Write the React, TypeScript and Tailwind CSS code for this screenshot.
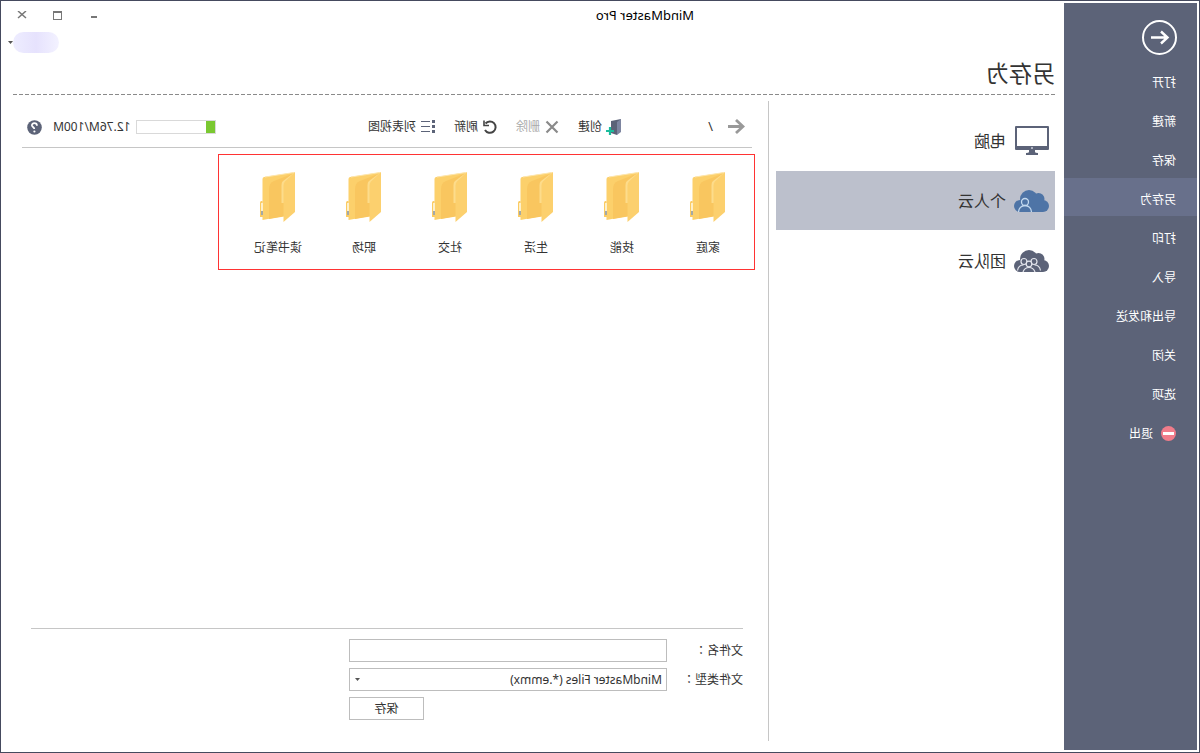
import { useState } from "react";
import clsx from "clsx";

const menu = ["打开", "新建", "保存", "另存为", "打印", "导入", "导出和发送", "关闭", "选项"];
const folders = ["家庭", "技能", "生活", "社交", "职场", "读书笔记"];

function MonitorIcon() {
  return (
    <svg className="h-[29px] w-[34px]" viewBox="0 0 34 29" fill="#5c6378">
      <path fillRule="evenodd" d="M1 0h32a1 1 0 0 1 1 1v22a1 1 0 0 1-1 1H1a1 1 0 0 1-1-1V1a1 1 0 0 1 1-1ZM2 2v18h30V2Z" />
      <path d="M14 24h6v2q0 1 3 1v2H11v-2q3 0 3-1Z" />
      <rect x="16" y="21" width="2" height="2" rx="1" fill="#c8ccd8" />
    </svg>
  );
}

function Cloud() {
  return (
    <>
      <circle cx="20" cy="9" r="9" />
      <circle cx="10.5" cy="9" r="6" />
      <circle cx="6" cy="16" r="6" />
      <circle cx="29" cy="16" r="6" />
      <rect x="6" y="10" width="23" height="12" />
    </>
  );
}

function PersonalCloudIcon() {
  return (
    <svg className="h-[22px] w-[35px]" viewBox="0 0 35 22" fill="#4e74a6">
      <Cloud />
      <g fill="none" stroke="#c3d9ef" strokeWidth="1.3">
        <circle cx="24" cy="12" r="3.5" />
        <path d="M17.5 22a6.500 6.500 0 0 1 13 0" />
      </g>
    </svg>
  );
}

function TeamCloudIcon() {
  return (
    <svg className="h-[22px] w-[35px]" viewBox="0 0 35 22" fill="#5c6378">
      <Cloud />
      <g fill="none" stroke="#e3e5ec" strokeWidth="1.2">
        <circle cx="15" cy="11.500" r="3" />
        <circle cx="25" cy="11.500" r="3" />
        <path d="M8.500 20.500q1-5.500 6-5.500M31.500 20.500q-1-5.500-6-5.500M14 22q1.500-4.500 6-4.500t6 4.500" />
        <circle cx="20" cy="14" r="2.800" fill="#5c6378" />
      </g>
    </svg>
  );
}

function FolderIcon() {
  return (
    <svg className="h-[50px] w-[35px]" viewBox="0 0 35 50">
      <path d="M32.500 29h1a1.500 1.500 0 0 1 1.500 1.500V45h-3Z" fill="#fbcb62" />
      <path d="M2 0.500 31 5q1.500 0.300 1.500 2V48L11 44Z" fill="#fcd06b" />
      <path d="M1 0.500 30 5" stroke="#fde6ae" strokeWidth="1" />
      <path d="M2 1.500 21 9q5 2 5 8v30L8 44Z" fill="#f9c65f" />
      <path d="M0 0 12 9q1.500 1 1.500 4v18H10Z" fill="#fddc8b" />
      <path d="M0 0 10 9.500q1.500 1.500 1.500 4V50L0 40Z" fill="#fcd06e" />
      <rect x="32" y="31" width="2" height="12" fill="#fdf0cb" />
      <rect x="32" y="39" width="2" height="4" fill="#a3a9a8" />
    </svg>
  );
}

function NewFolderIcon() {
  return (
    <svg className="size-4" viewBox="0 0 16 16">
      <path d="M1 0 11 2v12L5 16Z" fill="#5c6378" />
      <path d="M1 0 5 3v13L1 13Z" fill="#7d85a0" />
      <path d="M12 8v8M8 12h8" stroke="#1abc9c" strokeWidth="2.200" />
    </svg>
  );
}

function DeleteIcon() {
  return (
    <svg className="size-4" viewBox="0 0 16 16" fill="none" stroke="#8a8a8a" strokeWidth="2.200">
      <path d="m2.500 2.500 11 11M13.500 2.500l-11 11" />
    </svg>
  );
}

function RefreshIcon() {
  return (
    <svg className="size-4" viewBox="0 0 16 16" fill="none" stroke="#444" strokeWidth="2">
      <path d="M12.500 4.500A5.700 5.700 0 1 0 13 11" />
      <path d="M14 1.500v5H9" strokeWidth="1.600" />
    </svg>
  );
}

function ListIcon() {
  return (
    <svg className="size-4" viewBox="0 0 16 16" fill="#5c6378">
      <path d="M1 1h3v3H1zM1 6h3v3H1zM1 11h3v3H1zM6 2h9v1H6zM6 7h9v1H6zM6 12h9v1H6z" />
    </svg>
  );
}

function Caret() {
  return (
    <svg className="h-[3px] w-[5px]" viewBox="0 0 5 3" fill="#555">
      <path d="M0 0h5L2.500 3Z" />
    </svg>
  );
}

const places = [
  { title: "电脑", icon: MonitorIcon },
  { title: "个人云", icon: PersonalCloudIcon },
  { title: "团队云", icon: TeamCloudIcon },
];

const tools = [
  { title: "创建", icon: NewFolderIcon },
  { title: "删除", icon: DeleteIcon, disabled: true },
  { title: "刷新", icon: RefreshIcon },
  { title: "列表视图", icon: ListIcon },
];

function Sidebar() {
  return (
    <nav className="flex w-[133px] shrink-0 flex-col bg-[#5c6378] pt-4 text-white">
      <button aria-label="返回" className="mb-[6px] ml-5 size-9">
        <svg className="size-9" viewBox="0 0 36 36" fill="none" stroke="white" strokeWidth="2">
          <circle cx="17.500" cy="18.500" r="16.500" />
          <path d="M26 18.500H10M16 12.500l-6.500 6 6.500 6" strokeWidth="2.400" />
        </svg>
      </button>
      {menu.map((title) => (
        <button
          key={title}
          className={clsx("mb-px flex h-[38px] items-center pt-[6px] pl-[21px]", title === "另存为" && "bg-[#68708b]")}
        >
          {title}
        </button>
      ))}
      <button className="flex h-[38px] items-center gap-2 pt-[5px] pl-[21px]">
        <svg className="size-[15px]" viewBox="0 0 15 15">
          <circle cx="7.500" cy="7.500" r="7.500" fill="#f07c8a" />
          <rect x="2" y="6" width="11" height="3" fill="white" />
        </svg>
        退出
      </button>
    </nav>
  );
}

function TitleBar() {
  return (
    <div className="flex h-[26px] items-center">
      <h1 className="flex-1 text-center text-[13px] text-black">MindMaster Pro</h1>
      <div className="flex w-[223px] justify-end pr-px">
        <button aria-label="最小化" className="grid h-6 w-9 place-items-center">
          <svg className="size-[10px]" viewBox="0 0 10 10" fill="#777"><path d="M2 5h6v2H2z" /></svg>
        </button>
        <button aria-label="最大化" className="grid h-6 w-9 place-items-center">
          <svg className="size-[10px]" viewBox="0 0 10 10" fill="#777"><path fillRule="evenodd" d="M1 0h9v9H1zM2 2v6h7V2z" /></svg>
        </button>
        <button aria-label="关闭" className="grid h-6 w-9 place-items-center">
          <svg className="size-[10px]" viewBox="0 0 10 10" stroke="#777" strokeWidth="1.500"><path d="m1 0 8 7M9 0 1 7" /></svg>
        </button>
      </div>
    </div>
  );
}

function Toolbar() {
  return (
    <div className="ml-[3px] flex h-[47px] shrink-0 items-center border-b border-[#c6c6c6] pt-[6px] pr-[5px] pl-[7px]">
      <button aria-label="上一级">
        <svg className="h-4 w-[17px]" viewBox="0 0 17 16" fill="none" stroke="#999" strokeWidth="2.800">
          <path d="M17 7.500H3M9 1 2 7.500 9 14" />
        </svg>
      </button>
      <span className="ml-[15px] w-[91px] text-[13px]">/</span>
      <div className="flex gap-[18px]">
        {tools.map((tool) => (
          <button key={tool.title} disabled={tool.disabled} className="flex items-center gap-1 disabled:text-[#aaa]">
            <tool.icon />
            {tool.title}
          </button>
        ))}
      </div>
      <div className="ml-auto flex items-center">
        <div className="h-[14px] w-20 border border-[#d9d9d9]">
          <div className="h-full bg-[#7ac831]" style={{ width: "12.76%" }} />
        </div>
        <span className="ml-[6px]">12.76M/100M</span>
        <button aria-label="帮助" className="ml-[11px]">
          <svg className="size-[15px]" viewBox="0 0 15 15" fill="none">
            <circle cx="7.500" cy="7.500" r="7.300" fill="#5c6378" />
            <path d="M5 5.800q0-2.600 2.600-2.600t2.500 2.300c0 1.500-2.400 1.600-2.400 3.500" stroke="white" strokeWidth="1.700" />
            <circle cx="7.600" cy="11.500" r="1.100" fill="white" />
          </svg>
        </button>
      </div>
    </div>
  );
}

// The Traditional Chinese face centres the full-width colon in its cell
function Colon() {
  return <span className="font-['Noto_Sans_CJK_TC',sans-serif]" lang="zh-TW">：</span>;
}

function SaveForm() {
  const [name, setName] = useState("");
  return (
    <form
      className="mt-auto mr-[9px] ml-3 flex flex-col gap-[6px] border-t border-[#c6c6c6] pt-[10px] pb-[21px]"
      onSubmit={(e) => e.preventDefault()}
    >
      <div className="flex h-[23px] items-center">
        <label htmlFor="file-name" className="w-[76px]">文件名<Colon /></label>
        <input
          id="file-name"
          value={name}
          onChange={(e) => setName(e.target.value)}
          className="h-[23px] w-[318px] border border-[#bdbdbd] px-1 outline-none"
        />
      </div>
      <div className="flex h-[23px] items-center">
        <label htmlFor="file-type" className="w-[76px]">文件类型<Colon /></label>
        <div className="relative">
          <select id="file-type" className="block h-[23px] w-[318px] appearance-none border border-[#bdbdbd] bg-white px-1 outline-none">
            <option>MindMaster Files (*.emmx)</option>
          </select>
          <span className="pointer-events-none absolute top-[10px] right-[6px]">
            <Caret />
          </span>
        </div>
      </div>
      <div className="flex w-[394px] justify-end">
        <button className="h-[23px] w-[75px] border border-[#bdbdbd]">保存</button>
      </div>
    </form>
  );
}

export default function App() {
  return (
    // The whole window is shown flipped left to right
    <div className="flex min-h-screen -scale-x-100 border border-[#454a5e] bg-white p-[2px] font-['Noto_Sans','Noto_Sans_CJK_SC',sans-serif] text-xs text-[#333]">
      <Sidebar />
      <div className="flex min-w-0 flex-1 flex-col">
        <TitleBar />
        <div className="mt-[3px] flex h-[21px] items-center justify-end pr-[5px]">
          <button aria-label="账户" className="flex items-center">
            <span className="h-[21px] w-[46px] rounded-full bg-linear-to-r from-[#f3f2ff] via-[#e6e2fd] to-[#eeedff]" />
            <Caret />
          </button>
        </div>
        <main className="flex flex-1 flex-col pr-[10px] pb-[9px] pl-[9px]">
          <h2 className="h-[41px] text-[23px] leading-[41px]">另存为</h2>
          <div className="h-px bg-[repeating-linear-gradient(90deg,#8a8a8a_0_4px,transparent_4px_6px)]" />
          <div className="mt-[6px] flex flex-1">
            <ul className="mr-[7px] flex w-[279px] shrink-0 flex-col gap-px pt-[10px]">
              {places.map((place) => (
                <li key={place.title}>
                  <button
                    className={clsx(
                      "flex h-[59px] w-full items-center gap-2 pl-[6px] text-base",
                      place.title === "个人云" && "bg-[#bcc0cc]",
                    )}
                  >
                    <span className="flex w-[35px]"><place.icon /></span>
                    {place.title}
                  </button>
                </li>
              ))}
            </ul>
            <section className="flex min-w-0 flex-1 flex-col border-l border-[#c6c6c6] pr-[9px] pl-[13px]">
              <Toolbar />
              <ul className="mt-[6px] flex w-[537px] border border-[#f33] pt-[17px] pr-4 pb-3 pl-[3px]">
                {folders.map((folder) => (
                  <li key={folder} className="w-[86px]">
                    <button className="flex w-full flex-col items-center gap-[17px]">
                      <FolderIcon />
                      <span className="leading-[18px]">{folder}</span>
                    </button>
                  </li>
                ))}
              </ul>
              <SaveForm />
            </section>
          </div>
        </main>
      </div>
    </div>
  );
}
